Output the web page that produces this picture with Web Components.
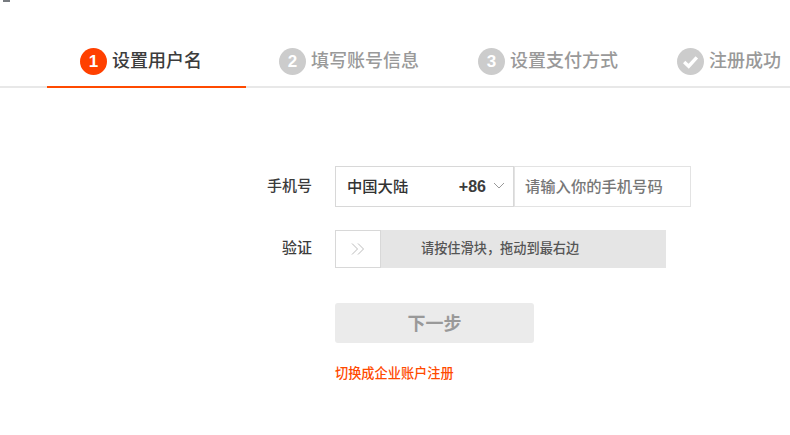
<!DOCTYPE html>
<html lang="zh"><head><meta charset="utf-8"><style>
html,body{margin:0;background:#fff;overflow:hidden}
body{font-family:"Noto Sans CJK SC","Liberation Sans",sans-serif;width:790px;height:435px}
</style></head><body>
<reg-page>
  <step-bar>
    <step-tab n="1" active>设置用户名</step-tab>
    <step-tab n="2">填写账号信息</step-tab>
    <step-tab n="3">设置支付方式</step-tab>
    <step-tab check>注册成功</step-tab>
  </step-bar>
  <reg-form>
    <form-row label="手机号" h="41"><phone-field></phone-field></form-row>
    <form-row label="验证" h="38"><slide-verify>请按住滑块，拖动到最右边</slide-verify></form-row>
    <form-row h="40"><next-button>下一步</next-button></form-row>
    <form-row h="16"><switch-link>切换成企业账户注册</switch-link></form-row>
  </reg-form>
</reg-page>
<script>
function def(name,html,init){customElements.define(name,class extends HTMLElement{constructor(){super();const r=this.attachShadow({mode:'open'});r.innerHTML=html;}connectedCallback(){init&&init(this,this.shadowRoot)}})}
def('reg-page','<style>:host{display:block;width:790px;height:435px;overflow:hidden;box-sizing:border-box}.crumb{display:block;margin-left:3px;width:7px;height:2px;margin-bottom:39px;background:#4a4f55;opacity:.75}</style><span class="crumb"></span><slot></slot>');
def('step-bar','<style>:host{display:flex;height:47px;box-sizing:border-box;border-bottom:2px solid #e8e8e8;padding-left:47px}</style><slot></slot>');
def('step-tab',`<style>:host{display:flex;flex:none;width:199px;height:47px;box-sizing:border-box;padding:7px 0 0 33px;gap:5px;align-items:flex-start;font-size:18px;line-height:26px;color:#999;font-weight:500}
:host([active]){color:#3c3c3c;border-bottom:2px solid #ff4a00}
.c{flex:none;width:27px;height:27px;border-radius:50%;background:#ccc;color:#fff;font:700 17px/27px "Liberation Sans",sans-serif;text-align:center;display:flex;align-items:center;justify-content:center}
:host([active]) .c{background:#ff4000}
.t{margin-top:-2px}
svg{display:block}</style><span class="c"></span><span class="t"><slot></slot></span>`,(el,r)=>{
  const c=r.querySelector('.c');
  if(el.hasAttribute('check'))c.innerHTML='<svg width="19" height="17" viewBox="0 0 18 16"><path d="M3 8.5l4.3 4L15 4" fill="none" stroke="#fff" stroke-width="3.2"/></svg>';
  else c.textContent=el.getAttribute('n');
});
def('reg-form','<style>:host{display:flex;flex-direction:column;padding-top:78px}</style><slot></slot>');
def('form-row',`<style>:host{display:flex;align-items:stretch;flex:none}
:host{margin-bottom:23px}
:host(:nth-child(2)){margin-bottom:35px}
:host(:nth-child(3)){margin-bottom:23px}
.l{flex:none;width:312px;margin-right:23px;text-align:right;font-size:15px;font-weight:500;color:#3c3c3c;display:flex;align-items:center;justify-content:flex-end;padding-bottom:5px;box-sizing:border-box}</style><span class="l"></span><slot></slot>`,(el,r)=>{
  r.querySelector('.l').textContent=el.getAttribute('label')||'';
  el.style.height=el.getAttribute('h')+'px';
});
def('phone-field',`<style>:host{display:flex;font-size:15.3px;height:41px;box-sizing:border-box}
.sel{width:179px;box-sizing:border-box;border:1px solid #d8d8d8;display:flex;align-items:center;padding:0 8px 3px 12px;color:#333;font-weight:500}
.sel span{margin-left:-1px}
.sel b{margin-left:auto;margin-top:3px;font:700 16px "Liberation Sans",sans-serif;color:#3c3c3c}
.sel svg{margin-left:7px}
.inp{width:177px;box-sizing:border-box;border:1px solid #e3e3e3;display:flex;align-items:center;padding:0 0 3px 11px;color:#777;font-weight:500}
.inp span{margin-left:-1px}</style>
<div class="sel"><span>中国大陆</span><b>+86</b><svg width="12" height="7" viewBox="0 0 12 7"><path d="M1 1l5 5 5-5" fill="none" stroke="#999" stroke-width="1"/></svg></div><div class="inp"><span>请输入你的手机号码</span></div>`);
def('slide-verify',`<style>:host{display:flex;width:331px;height:38px;background:#e5e5e5;font-size:13.2px;color:#555;font-weight:500}
.h{flex:none;width:46px;box-sizing:border-box;background:#fff;border:1px solid #d8d8d8;display:flex;align-items:center;justify-content:center}
.t{padding:0 0 3px 40px;display:flex;align-items:center}</style>
<div class="h"><svg width="14" height="12" viewBox="0 0 14 12"><path d="M1 .5l5.5 5.5-5.5 5.5M7 .5l5.5 5.5-5.5 5.5" fill="none" stroke="#bbb" stroke-width="1"/></svg></div><div class="t"><slot></slot></div>`);
def('next-button',`<style>:host{display:flex;align-items:center;justify-content:center;box-sizing:border-box;padding-bottom:3px;width:199px;height:40px;background:#ebebeb;border-radius:3px;color:#999;font-size:18px;font-weight:700}</style><slot></slot>`);
def('switch-link',`<style>:host{display:block;font-size:13.2px;line-height:16px;margin-top:-1px;color:#ff4a00;font-weight:500}</style><slot></slot>`);
</script>
</body></html>
